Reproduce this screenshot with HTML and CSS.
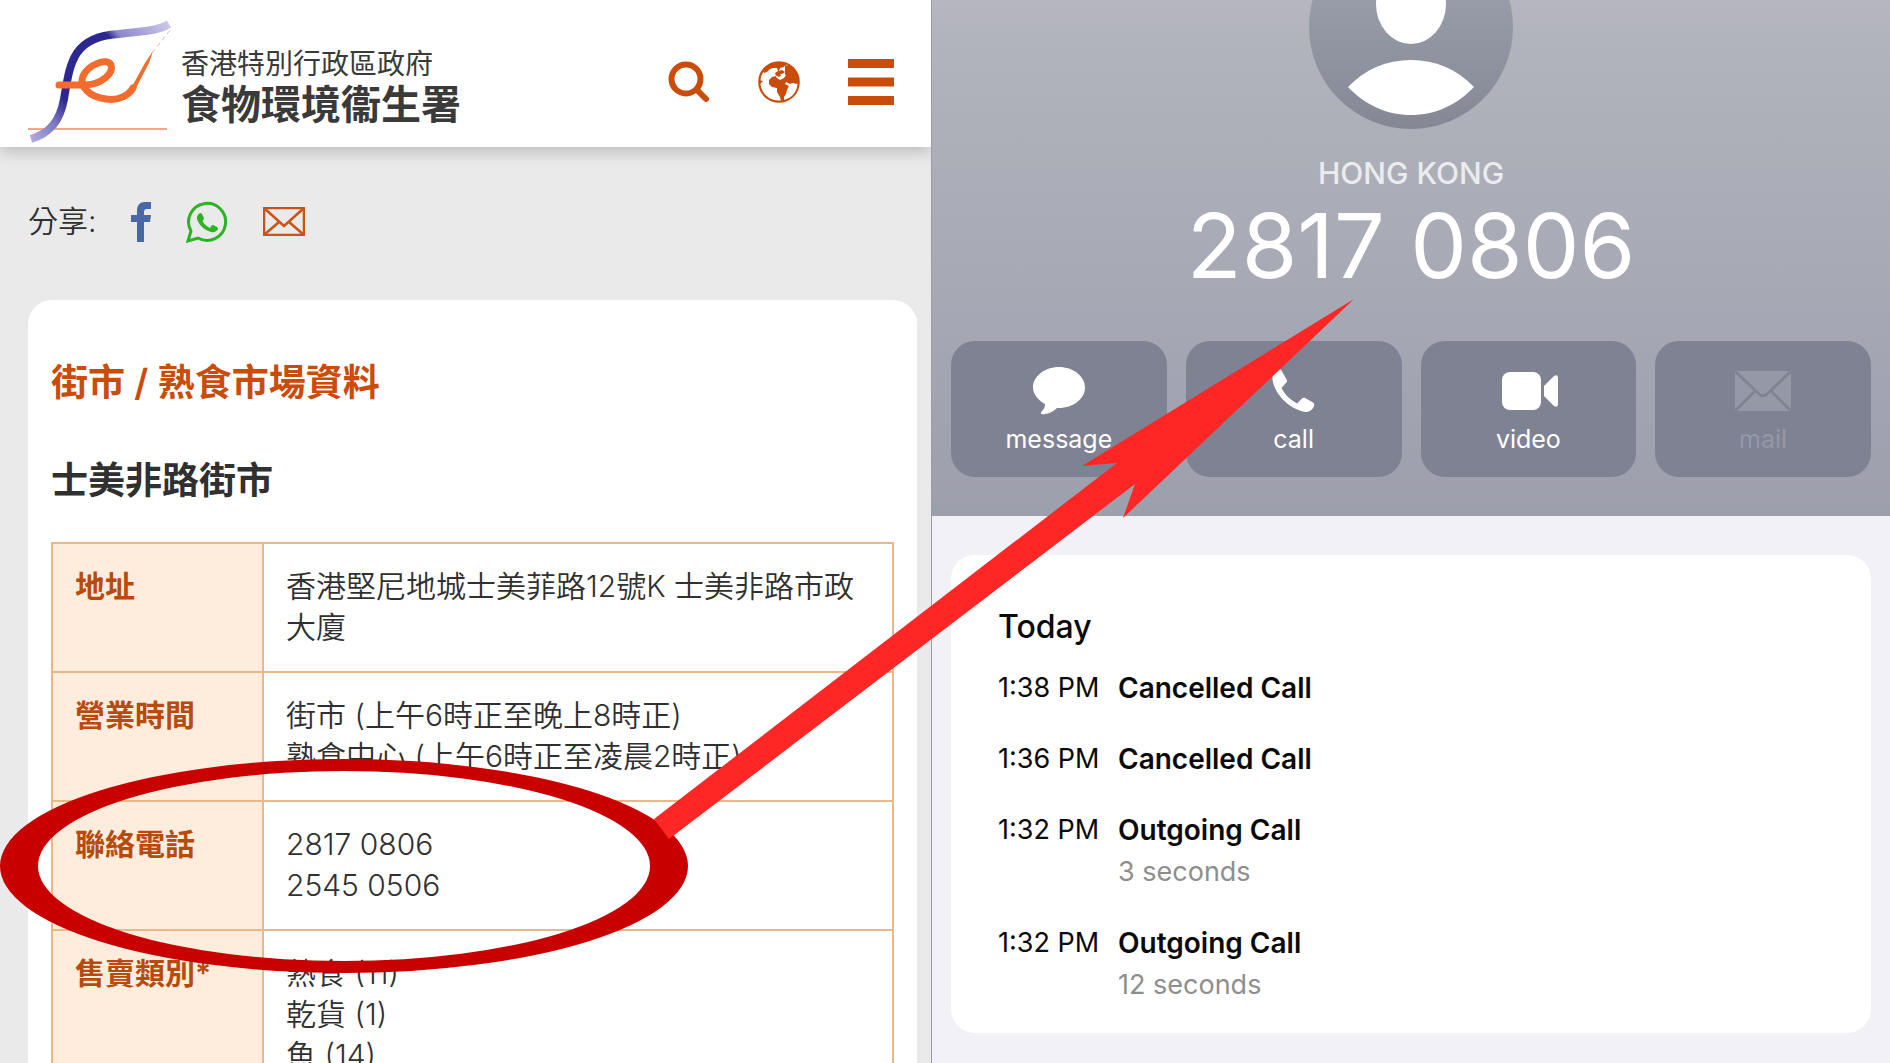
FILE: index.html
```html
<!DOCTYPE html>
<html lang="zh-Hant">
<head>
<meta charset="utf-8">
<meta name="viewport" content="width=device-width, initial-scale=1">
<title>士美非路街市</title>
<link rel="stylesheet" href="styles.css">
</head>
<body>
<div class="stage">
  <section class="site">
    <header class="site-header">
      <a class="brand" href="#">
        <svg class="brand-mark" viewBox="0 0 144 124" aria-hidden="true">
          <defs>
            <linearGradient id="stem" gradientUnits="userSpaceOnUse" x1="0" y1="124" x2="144" y2="0">
              <stop offset="0" stop-color="#b9b5e2"/>
              <stop offset=".18" stop-color="#7b76c0"/>
              <stop offset=".3" stop-color="#2c2890"/>
              <stop offset=".69" stop-color="#2c2890"/>
              <stop offset=".74" stop-color="#8c88cc"/>
              <stop offset="1" stop-color="#d3d0ee"/>
            </linearGradient>
          </defs>
          <path d="M0 109h139" stroke="#f9a58c" stroke-width="2"/>
          <path d="M3 119C22 113 32 101 36 79C42 44 44 17 90 14C111 11 128 12 141 4" fill="none" stroke="url(#stem)" stroke-width="8"/>
          <path d="M31 65H58C74 64 86 53 83 45C79 37 60 45 55 56C51 66 61 77 78 79C91 81 101 75 105 68" fill="none" stroke="#f36c2d" stroke-width="7" stroke-linecap="round"/>
          <path d="M102 70L117 43L125 31L121 43L108 68Z" fill="#f36c2d"/>
          <path d="M124 33L143 9" stroke="#f9b79b" stroke-width="1" stroke-dasharray="5 3"/>
        </svg>
        <span class="brand-text">
          <span class="brand-gov">香港特別行政區政府</span>
          <span class="brand-dept">食物環境衞生署</span>
        </span>
      </a>
      <nav class="tools">
        <button class="tool" type="button" aria-label="搜尋">
          <svg width="42" height="42" viewBox="0 0 42 42"><circle cx="18" cy="18" r="14.5" fill="none" stroke="#c94c0a" stroke-width="6"/><path d="M29 29l9 9" stroke="#c94c0a" stroke-width="6" stroke-linecap="round"/></svg>
        </button>
        <button class="tool" type="button" aria-label="語言">
          <svg width="42" height="42" viewBox="0 0 42 42"><circle cx="21" cy="21" r="19.7" fill="#fff" stroke="#c94c0a" stroke-width="2.2"/><path fill="#c94c0a" d="M5 10C9 4 17 1 22 1L28 3L26 6L22 7L21 10L24 9L27 11L24 13L22 13L25 16L28 14L28 9L31 4C36 8 40 12 41 22L38 23L35 22L32 23L28 21L27 23L31 25L29 29L28 33L26 36L26 40L23 40L22 36L19 31L19 27L14 26L11 23L11 19L14 16L18 15L17 12L20 10L19 7L15 7L12 8L9 11L6 12ZM1 19l4 1l-3 3z"/><path fill="#c94c0a" d="M27 4L34 6L40 16L37 20L29 20L27 16Z"/><path fill="#fff" d="M17 14l4 2l4-3l3 1l-2 3l-4 2l-3-2zM31 24l4-2l4 2c0 5-3 10-8 13l-1-6z"/></svg>
        </button>
        <button class="tool" type="button" aria-label="選單">
          <svg width="46" height="46" viewBox="0 0 46 46"><path fill="#c94c0a" d="M0 0h46v9H0zM0 18.500h46v9H0zM0 37h46v9H0z"/></svg>
        </button>
      </nav>
    </header>

    <div class="share">
      <span>分享:</span>
      <a href="#" aria-label="Facebook"><svg width="20" height="40" viewBox="0 0 20 40"><path fill="#4a68a5" d="M6 40V20H0V13H6V9C6 3 9 0 14 0H20V7H16C14 7 13 8 13 10V13H20L19 20H13V40Z"/></svg></a>
      <a href="#" aria-label="WhatsApp"><svg width="42" height="42" viewBox="0 0 42 42"><path d="M2 40L5 30A18.500 18.500 0 1 1 12 37Z" fill="none" stroke="#2cb321" stroke-width="3"/><path fill="#2cb321" d="M12 14C13 12 15 11 16 13L18 17C18 19 16 19 17 21C19 24 21 25 24 27L26 24C28 24 31 26 32 27C32 30 28 32 25 31C18 29 13 24 11 18C11 16 11 15 12 14Z"/></svg></a>
      <a href="#" aria-label="電郵"><svg width="42" height="29" viewBox="0 0 42 29"><g fill="none" stroke="#cb5317" stroke-width="2.500"><path d="M1 1H41V28H1Z"/><path d="M1 1L21 19L41 1M1 28L16 15M41 28L26 15"/></g></svg></a>
    </div>

    <main class="card">
      <h1>街市 / 熟食市場資料</h1>
      <h2>士美非路街市</h2>
      <table class="facts">
        <tbody>
          <tr><th scope="row">地址</th><td>香港堅尼地城士美菲路12號K 士美非路市政大廈</td></tr>
          <tr><th scope="row">營業時間</th><td>街市 (上午6時正至晚上8時正)<br>熟食中心 (上午6時正至凌晨2時正)</td></tr>
          <tr><th scope="row">聯絡電話</th><td>2817 0806<br>2545 0506</td></tr>
          <tr><th scope="row">售賣類別*</th><td>熟食 (11)<br>乾貨 (1)<br>魚 (14)</td></tr>
        </tbody>
      </table>
    </main>
  </section>

  <section class="phone" lang="en">
    <div class="contact">
      <svg class="avatar" width="204" height="204" viewBox="0 0 204 204" aria-hidden="true">
        <defs><linearGradient id="av" x1="0" y1="0" x2="0" y2="1"><stop offset="0" stop-color="#a2a8b6"/><stop offset="1" stop-color="#858894"/></linearGradient></defs>
        <circle cx="102" cy="102" r="102" fill="url(#av)"/>
        <ellipse cx="102" cy="79" rx="35" ry="40" fill="#fff"/>
        <path fill="#fff" d="M39 162C56 144 78 135 102 135C126 135 148 144 165 162C148 180 126 190 102 190C78 190 56 180 39 162Z"/>
      </svg>
      <p class="region">HONG KONG</p>
      <p class="number">2817 0806</p>
      <div class="actions">
        <button class="action" type="button">
          <svg width="52" height="48" viewBox="0 0 52 48"><path fill="#fff" d="M26 0C40 0 52 9 52 20.500C52 32 40 41 26 41H24C20 45 13 48 9 47C7 47 8 45 9 44C11 42 12 40 12 37C5 33 0 27 0 20.500C0 9 12 0 26 0Z"/></svg>
          message
        </button>
        <button class="action" type="button">
          <svg width="48" height="48" viewBox="2 2 20 20"><path fill="#fff" d="M6.800 10.800C8.200 13.600 10.500 15.800 13.300 17.200L15 15.400C15.500 14.900 16.200 14.700 16.800 15L19.800 16.700C20.500 17.200 20.600 17.800 20.300 18.500C19.500 20.200 18 21 16.200 20.600C10 19.500 3.500 13 3 6.800C3 5 4 3.800 5.500 3C6 2.800 6.400 3 6.700 3.400L9 7.300C9.200 7.700 9.100 8.100 8.800 8.500Z"/></svg>
          call
        </button>
        <button class="action" type="button">
          <svg width="60" height="48" viewBox="-4 0 60 48"><rect y="5" width="39" height="38" rx="8" fill="#fff"/><path fill="#fff" d="M42 19L52 9Q56 7 56 11V37Q56 41 52 39L42 29Z"/></svg>
          video
        </button>
        <button class="action" type="button" disabled>
          <svg width="56" height="48" viewBox="0 0 56 48"><rect y="4" width="56" height="40" rx="3" fill="#9598a6"/><path d="M1 5L24 27Q28 31 32 27L55 5M1 43L20 24M55 43L36 24" fill="none" stroke="#7f8292" stroke-width="2.500"/></svg>
          mail
        </button>
      </div>
    </div>
    <div class="log">
      <h3>Today</h3>
      <ul>
        <li><time>1:38 PM</time><strong>Cancelled Call</strong></li>
        <li><time>1:36 PM</time><strong>Cancelled Call</strong></li>
        <li><time>1:32 PM</time><strong>Outgoing Call</strong><small>3 seconds</small></li>
        <li><time>1:32 PM</time><strong>Outgoing Call</strong><small>12 seconds</small></li>
      </ul>
    </div>
  </section>

  <svg class="markup" viewBox="0 0 1890 1063" preserveAspectRatio="none" aria-hidden="true">
    <path fill="#c80000" fill-rule="evenodd" d="M0 866a344 107 0 1 0 688 0a344 107 0 1 0 -688 0ZM38 866a306 95 0 1 1 612 0a306 95 0 1 1 -612 0Z"/>
    <path fill="#ff2626" d="M1354 299L1123 518L1135 484L669 839L654 819L1117 463L1082 466Z"/>
  </svg>
</div>
</body>
</html>
```
FILE: styles.css
```css
* {
  box-sizing: border-box;
}

body {
  margin: 0;
  font-family: Inter, "Noto Sans CJK TC", sans-serif;
  color: #303030;
}

h1, h2, h3, p, ul {
  margin: 0;
  padding: 0;
}

button {
  border: 0;
  padding: 0;
  background: none;
  font: inherit;
}

svg {
  display: block;
}

.stage {
  position: relative;
  display: grid;
  grid-template-columns: 931fr 959fr;
  height: 100vh;
  overflow: hidden;
}

/* Department web page */
.site {
  background: #eaeaea;
  min-width: 0;
}

.site-header {
  display: flex;
  justify-content: space-between;
  align-items: center;
  height: 147px;
  padding: 16px 37px 0 28px;
  background: #fff;
  box-shadow: 0 4px 16px rgba(0, 0, 0, 0.22);
}

.brand {
  display: flex;
  gap: 9px;
  color: #3a3a3a;
  text-decoration: none;
}

.brand-mark {
  width: 144px;
  height: 124px;
}

.brand-text {
  display: flex;
  flex-direction: column;
  padding-top: 26px;
}

.brand-gov {
  font-size: 28px;
  line-height: 36px;
}

.brand-dept {
  font-size: 40px;
  font-weight: 700;
  line-height: 46px;
}

.tools {
  display: flex;
  align-items: center;
  gap: 48px;
}

.share {
  display: flex;
  align-items: center;
  gap: 35px;
  height: 153px;
  padding: 0 28px 4px;
  font-size: 30px;
  font-weight: 350;
  line-height: 41px;
}

.card {
  margin: 0 14px 0 28px;
  padding: 57px 23px;
  border-radius: 24px;
  background: #fff;
}

h1, h2 {
  font-size: 37px;
  line-height: 52px;
  font-weight: 600;
}

h1 {
  margin-bottom: 46px;
  color: #c94c0a;
}

h2 {
  margin-bottom: 35px;
}

.facts {
  width: 100%;
  border-collapse: collapse;
  font-size: 30px;
  font-weight: 350;
  line-height: 41px;
}

.facts th, .facts td {
  padding: 22px 22px 23px;
  border: 2px solid #e8b889;
  text-align: left;
  vertical-align: top;
}

.facts th {
  width: 211px;
  background: #feeddc;
  color: #b84a0c;
  font-weight: 600;
  white-space: nowrap;
}

/* Phone contact screen */
.phone {
  min-width: 0;
  border-left: 1px solid #9a9ca4;
  background: #f2f1f7;
}

.contact {
  display: flex;
  flex-direction: column;
  align-items: center;
  height: 516px;
  padding: 0 19px;
  background: linear-gradient(#b6b6c0, #b1b4bb 40px, #a7a9b5 280px, #9c9fac);
}

.avatar {
  flex: none;
  margin-top: -75px;
}

.region {
  margin-top: 24px;
  color: #ebecf0;
  font-size: 30px;
  font-weight: 500;
  line-height: 40px;
}

.number {
  color: #fff;
  font-size: 90px;
  line-height: 106px;
}

.actions {
  display: grid;
  grid-template-columns: repeat(4, 1fr);
  gap: 19px;
  width: 100%;
  margin-top: 42px;
}

.action {
  display: flex;
  flex-direction: column;
  align-items: center;
  gap: 8px;
  height: 136px;
  padding-top: 26px;
  border-radius: 24px;
  background: #7f8292;
  color: #fff;
  font-size: 25px;
  line-height: 32px;
}

.action:disabled {
  color: #9598a6;
}

.log {
  margin: 39px 19px 0;
  padding: 52px 47px 27px;
  border-radius: 24px;
  background: #fff;
  color: #0a0a0a;
}

.log h3 {
  margin-bottom: 20px;
  font-size: 32px;
  font-weight: 500;
  line-height: 40px;
}

.log ul {
  display: grid;
  gap: 29px;
  list-style: none;
}

.log li {
  display: grid;
  grid-template-columns: 120px 1fr;
  font-size: 27px;
  line-height: 42px;
}

.log strong {
  font-size: 28px;
  font-weight: 600;
}

.log small {
  grid-column: 2;
  color: #8e8e8e;
  font-size: 27px;
}

/* Hand-drawn ring and arrow over both screens */
.markup {
  position: absolute;
  inset: 0;
  width: 100%;
  height: 100%;
  pointer-events: none;
}
```
